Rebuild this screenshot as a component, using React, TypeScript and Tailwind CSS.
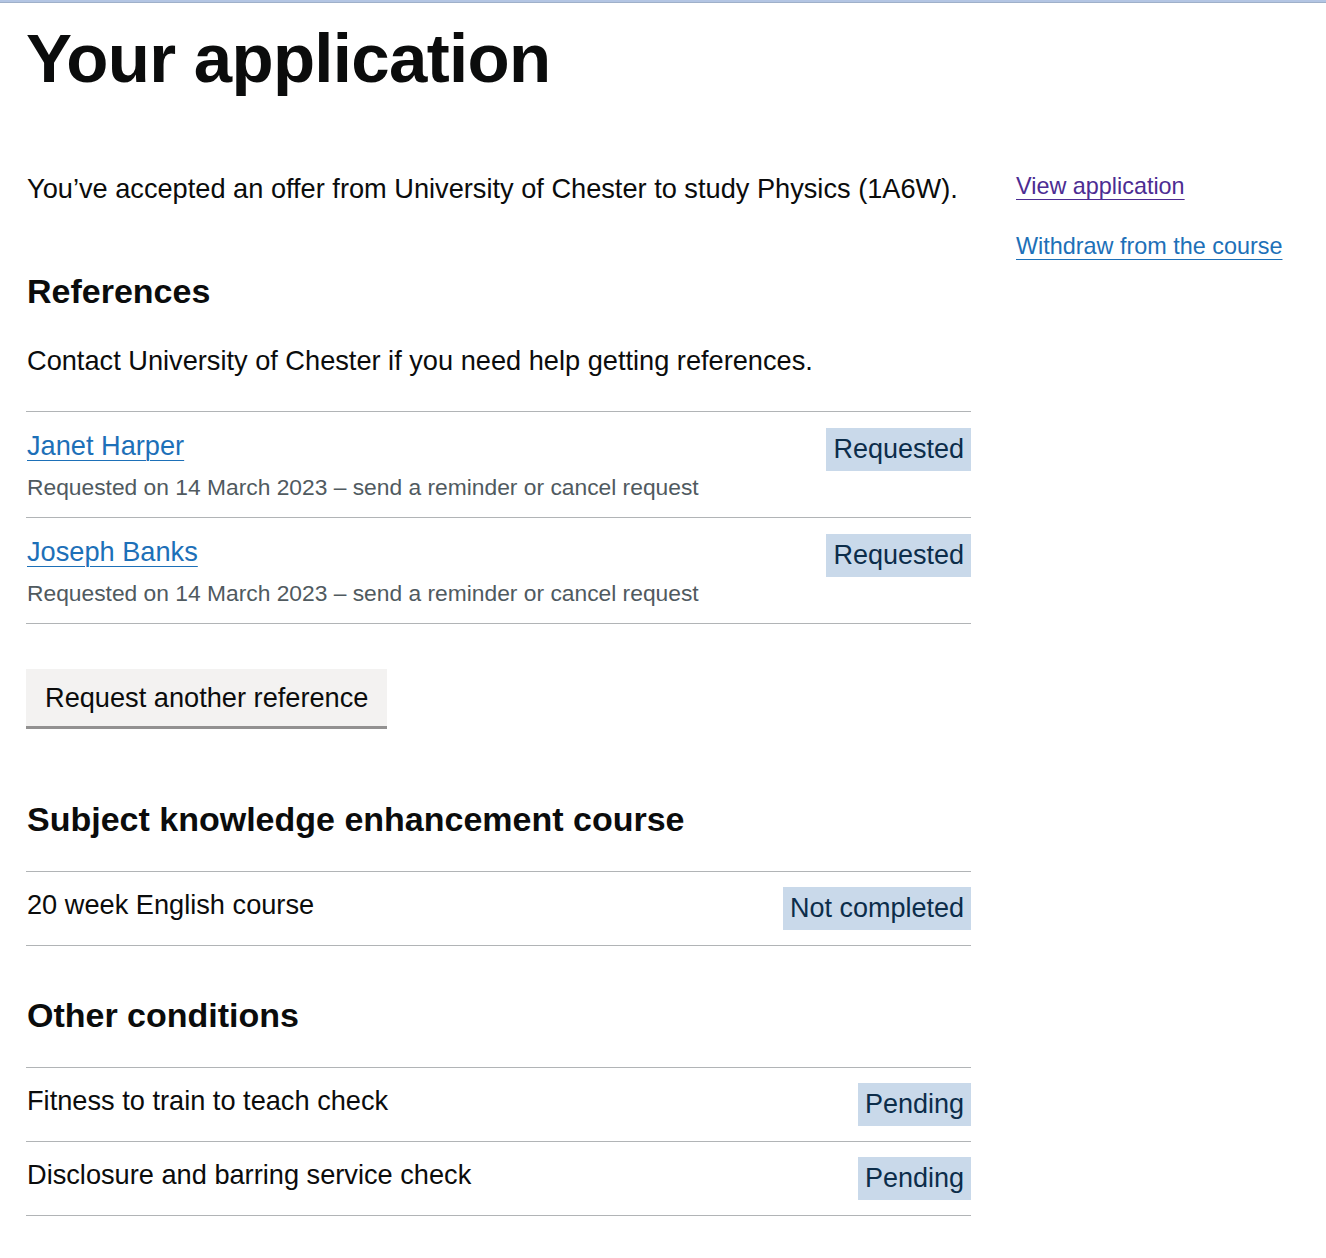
import React from "react";

type Status = { label: string };

function Tag({ label }: Status) {
    return (
        <strong className="inline-block bg-[#c9d9ea] text-[#0c2d4a] font-normal text-[27px] leading-[33px] px-[7px] py-[5px] whitespace-nowrap">
            {label}
        </strong>
    );
}

const references = [
    { name: "Janet Harper", date: "14 March 2023" },
    { name: "Joseph Banks", date: "14 March 2023" },
];

const conditions = ["Fitness to train to teach check", "Disclosure and barring service check"];

export default function App() {
    return (
        <div className="min-h-[1258px] bg-white text-[#0b0c0c] font-['Liberation_Sans',Arial,sans-serif]">
            <div className="h-[3px] bg-[#b3c5e3] border-b border-[#9fb0c9]" />
            <div className="px-[26px]">
                <h1 className="mt-[22px] text-[69px] leading-[68px] font-bold tracking-[-0.01em]">Your application</h1>

                <div className="mt-[78px] flex gap-[45px]">
                    {/* main column */}
                    <div className="w-[945px] shrink-0">
                        <p className="mt-[3px] text-[27.2px] leading-[30px] pl-px">
                            You’ve accepted an offer from University of Chester to study Physics (1A6W).
                        </p>

                        <h2 className="mt-[67px] text-[34px] leading-[40px] font-bold pl-px">References</h2>
                        <p className="mt-[35px] text-[27.2px] leading-[30px] pl-px">
                            Contact University of Chester if you need help getting references.
                        </p>

                        <div className="mt-[35px] border-t border-[#b1b4b6]">
                            {references.map(ref => (
                                <div key={ref.name} className="flex justify-between items-start border-b border-[#b1b4b6] pt-[16px] pb-[16px]">
                                    <div className="pt-[3px] pl-px">
                                        <p className="text-[27.2px] leading-[30px]">
                                            <a href="#" className="text-[#1d70b8] underline decoration-1 underline-offset-[0.2em]">
                                                {ref.name}
                                            </a>
                                        </p>
                                        <p className="mt-[12px] text-[22.8px] leading-[28px] text-[#505a5f]">
                                            Requested on {ref.date} – send a reminder or cancel request
                                        </p>
                                    </div>
                                    <Tag label="Requested" />
                                </div>
                            ))}
                        </div>

                        <button className="mt-[45px] bg-[#f3f2f1] text-[#0b0c0c] text-[27.2px] leading-[30px] px-[19px] pt-[14px] pb-[13px] shadow-[0_3px_0_#929191]">
                            Request another reference
                        </button>

                        <h2 className="mt-[73px] text-[34px] leading-[40px] font-bold pl-px">Subject knowledge enhancement course</h2>
                        <div className="mt-[32px] border-t border-[#b1b4b6]">
                            <div className="flex justify-between items-start border-b border-[#b1b4b6] py-[15px]">
                                <span className="mt-[3px] text-[27.2px] leading-[30px] pl-px">20 week English course</span>
                                <Tag label="Not completed" />
                            </div>
                        </div>

                        <h2 className="mt-[49px] text-[34px] leading-[40px] font-bold pl-px">Other conditions</h2>
                        <div className="mt-[32px] border-t border-[#b1b4b6]">
                            {conditions.map(c => (
                                <div key={c} className="flex justify-between items-start border-b border-[#b1b4b6] py-[15px]">
                                    <span className="mt-[3px] text-[27.2px] leading-[30px] pl-px">{c}</span>
                                    <Tag label="Pending" />
                                </div>
                            ))}
                        </div>
                    </div>

                    {/* side links */}
                    <div className="flex flex-col gap-[30px] text-[23.4px] leading-[30px]">
                        <a href="#" className="text-[#4c2c92] underline decoration-1 underline-offset-[0.2em]">View application</a>
                        <a href="#" className="text-[#1d70b8] underline decoration-1 underline-offset-[0.2em]">Withdraw from the course</a>
                    </div>
                </div>
            </div>
        </div>
    );
}
